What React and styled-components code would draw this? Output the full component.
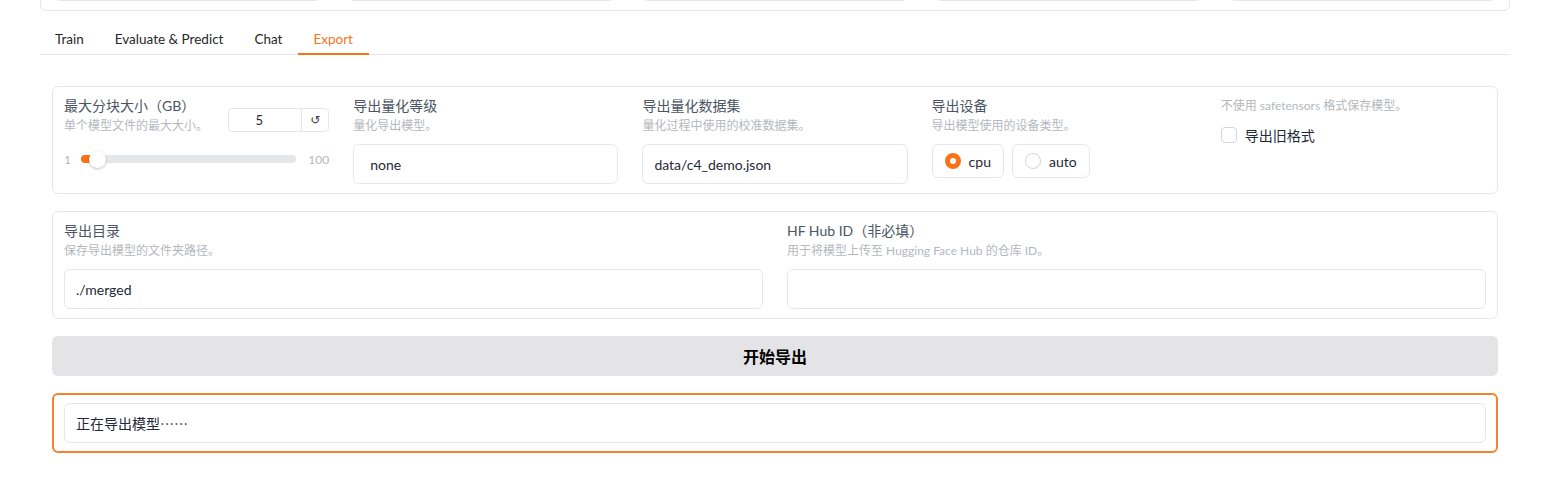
import React from "react";
import styled, { createGlobalStyle } from "styled-components";

const ORANGE = "#f97316";

const GlobalStyle = createGlobalStyle`
  body {
    margin: 0;
    background: #ffffff;
    font-family: Lato, "Noto Sans CJK SC", sans-serif;
    color: #1f2937;
    overflow: hidden;
  }
  * { box-sizing: border-box; }
`;

const Page = styled.div`
  margin: 0 44px 0 40px;
`;

// the card from the tab above, only its bottom edge shows
const TopBox = styled.div`
  margin-top: -50px;
  padding: 10px 13px 9px;
  border: 1px solid #e5e7eb;
  border-radius: 6px;
  display: grid;
  grid-template-columns: repeat(5, 1fr);
  gap: 27px;
`;

const GhostInput = styled.div`
  height: 40px;
  border: 1px solid #e5e7eb;
  border-radius: 6px;
`;

const TabBar = styled.div`
  margin-top: 14px;
  display: flex;
  border-bottom: 1px solid #e5e7eb;
`;

const Tab = styled.div`
  height: 30px;
  line-height: 28px;
  padding: 0 16px 0 15px;
  margin-bottom: -1px;
  font-size: 13.5px;
  color: ${(p) => (p.$active ? ORANGE : "#27272a")};
  border-bottom: 2px solid ${(p) => (p.$active ? ORANGE : "transparent")};
`;

const TabPanel = styled.div`
  padding: 31px 12px 0;
  display: flex;
  flex-direction: column;
  gap: 17px;
`;

const Panel = styled.div`
  border: 1px solid #e5e7eb;
  border-radius: 6px;
  padding: 10px 11px 9px;
  display: grid;
  grid-template-columns: repeat(${(p) => p.$cols}, 1fr);
  gap: 24px;
`;

const Field = styled.div`
  display: flex;
  flex-direction: column;
  min-width: 0;
`;

const Label = styled.div`
  font-size: 14px;
  line-height: 18px;
  color: #4b5563;
`;

const Desc = styled.div`
  margin-top: ${(p) => (p.$first ? 0 : 2)}px;
  font-size: 12px;
  line-height: 18px;
  color: #b4b7bd;
  white-space: nowrap;
`;

const TextBox = styled.div`
  margin-top: 9px;
  height: 40px;
  border: 1px solid #e5e7eb;
  border-radius: 6px;
  padding: 0 ${(p) => p.$pad || 11}px;
  display: flex;
  align-items: center;
  font-size: 14px;
  color: #1f2937;
`;

const HeadRow = styled.div`
  display: flex;
  justify-content: space-between;
  align-items: flex-start;
`;

const NumberBox = styled.div`
  margin-top: 11px;
  width: 101px;
  height: 24px;
  border: 1px solid #e5e7eb;
  border-radius: 4px;
  display: flex;
  font-size: 13px;
`;

const NumberValue = styled.div`
  flex: 1;
  display: flex;
  align-items: center;
  justify-content: center;
  padding-right: 12px;
  color: #1f2937;
`;

const ResetButton = styled.div`
  width: 27px;
  border-left: 1px solid #e5e7eb;
  display: flex;
  align-items: center;
  justify-content: center;
  font-family: "DejaVu Sans", sans-serif;
  font-size: 12px;
  color: #374151;
`;

const SliderRow = styled.div`
  margin-top: 14px;
  height: 20px;
  display: flex;
  align-items: center;
  gap: 10px;
  font-size: 12px;
  color: #b4b7bd;
`;

const Track = styled.div`
  position: relative;
  flex: 1;
  height: 8px;
  border-radius: 4px;
  background: #e5e7eb;
  margin-right: 2px;
`;

const Fill = styled.div`
  position: absolute;
  left: 0;
  top: 0;
  bottom: 0;
  border-radius: 4px 0 0 4px;
  background: ${ORANGE};
`;

const Thumb = styled.div`
  position: absolute;
  top: 50%;
  width: 17px;
  height: 17px;
  margin-left: -8px;
  margin-top: -8.5px;
  border-radius: 50%;
  background: #ffffff;
  box-shadow: 0 1px 3px rgba(0, 0, 0, 0.25);
`;

const RadioGroup = styled.div`
  margin-top: 9px;
  display: flex;
  gap: 8px;
`;

const RadioItem = styled.div`
  height: 34px;
  border: 1px solid #e5e7eb;
  border-radius: 6px;
  padding: 0 12px;
  display: flex;
  align-items: center;
  gap: 8px;
  font-size: 14px;
  color: #1f2937;
`;

const RadioDot = styled.span`
  width: 16px;
  height: 16px;
  border-radius: 50%;
  border: ${(p) => (p.$checked ? `5px solid ${ORANGE}` : "1px solid #d1d5db")};
  background: #ffffff;
`;

const CheckRow = styled.div`
  margin-top: 10px;
  display: flex;
  align-items: center;
  gap: 8px;
  font-size: 14px;
  color: #1f2937;
`;

const CheckBox = styled.span`
  width: 16px;
  height: 16px;
  border: 1px solid #d1d5db;
  border-radius: 4px;
  background: #ffffff;
`;

const RunButton = styled.div`
  height: 40px;
  border-radius: 6px;
  background: #e4e4e7;
  display: flex;
  align-items: center;
  justify-content: center;
  font-size: 16px;
  font-weight: bold;
  color: #000000;
`;

const OutputBox = styled.div`
  border: 2px solid #f5822d;
  border-radius: 6px;
  padding: 8px 10px;
`;

const OutputText = styled(TextBox)`
  margin-top: 0;
  font-family: "Noto Sans CJK SC", sans-serif;
`;

function Slider({ min, max, value }) {
  const pct = (value - min) / (max - min);
  const pos = `calc(${pct} * (100% - 16px) + 8px)`;
  return (
    <SliderRow>
      <span>{min}</span>
      <Track>
        <Fill style={{ width: pos }} />
        <Thumb style={{ left: pos }} />
      </Track>
      <span>{max}</span>
    </SliderRow>
  );
}

export default function App() {
  const tabs = ["Train", "Evaluate & Predict", "Chat", "Export"];
  return (
    <Page>
      <GlobalStyle />
      <TopBox>
        {[0, 1, 2, 3, 4].map((i) => (
          <GhostInput key={i} />
        ))}
      </TopBox>

      <TabBar>
        {tabs.map((t) => (
          <Tab key={t} $active={t === "Export"}>
            {t}
          </Tab>
        ))}
      </TabBar>

      <TabPanel>
        <Panel $cols={5}>
          <Field>
            <HeadRow>
              <div>
                <Label>最大分块大小（GB）</Label>
                <Desc>单个模型文件的最大大小。</Desc>
              </div>
              <NumberBox>
                <NumberValue>5</NumberValue>
                <ResetButton>↺</ResetButton>
              </NumberBox>
            </HeadRow>
            <Slider min={1} max={100} value={5} />
          </Field>

          <Field>
            <Label>导出量化等级</Label>
            <Desc>量化导出模型。</Desc>
            <TextBox $pad={16}>none</TextBox>
          </Field>

          <Field>
            <Label>导出量化数据集</Label>
            <Desc>量化过程中使用的校准数据集。</Desc>
            <TextBox>data/c4_demo.json</TextBox>
          </Field>

          <Field>
            <Label>导出设备</Label>
            <Desc>导出模型使用的设备类型。</Desc>
            <RadioGroup>
              <RadioItem>
                <RadioDot $checked />
                cpu
              </RadioItem>
              <RadioItem>
                <RadioDot />
                auto
              </RadioItem>
            </RadioGroup>
          </Field>

          <Field>
            <Desc $first>不使用 safetensors 格式保存模型。</Desc>
            <CheckRow>
              <CheckBox />
              导出旧格式
            </CheckRow>
          </Field>
        </Panel>

        <Panel $cols={2}>
          <Field>
            <Label>导出目录</Label>
            <Desc>保存导出模型的文件夹路径。</Desc>
            <TextBox>./merged</TextBox>
          </Field>
          <Field>
            <Label>HF Hub ID（非必填）</Label>
            <Desc>用于将模型上传至 Hugging Face Hub 的仓库 ID。</Desc>
            <TextBox />
          </Field>
        </Panel>

        <RunButton>开始导出</RunButton>

        <OutputBox>
          <OutputText>正在导出模型……</OutputText>
        </OutputBox>
      </TabPanel>
    </Page>
  );
}
